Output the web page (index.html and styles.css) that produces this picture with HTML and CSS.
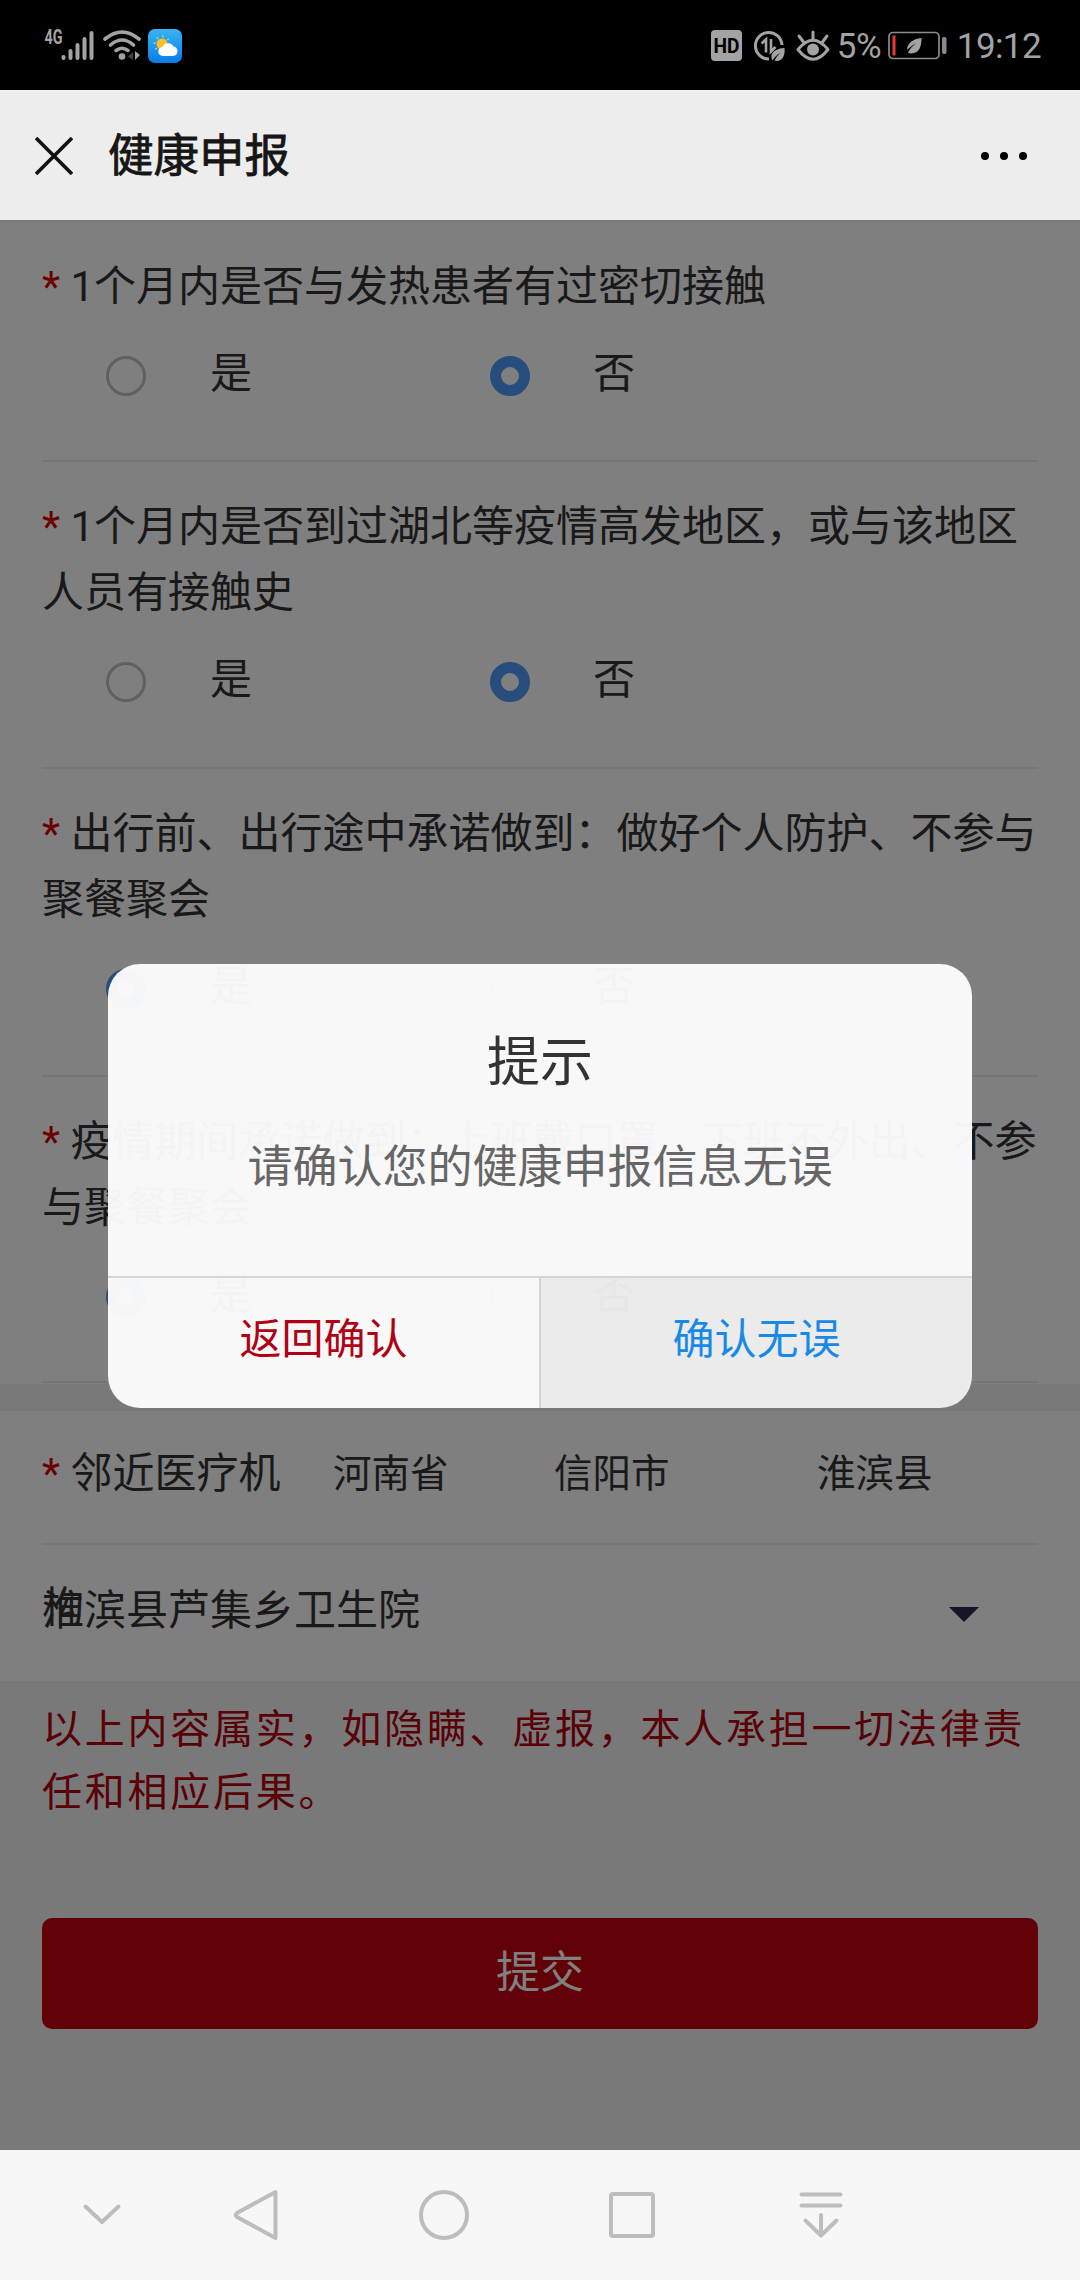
FILE: index.html
```
<!DOCTYPE html>
<html lang="zh-CN">
<head>
  <meta charset="UTF-8" />
  <meta name="viewport" content="width=device-width, initial-scale=1.0" />
  <title>健康申报</title>
  <link rel="stylesheet" href="styles.css">
</head>
<body>
  <div class="status-bar">
    <div class="status-left">
      <svg class="signal" width="52" height="34" viewBox="0 0 52 34">
        <text x="0.500" y="15" font-size="20" font-weight="bold" fill="#a3a3a3" textLength="18" lengthAdjust="spacingAndGlyphs">4G</text>
        <g stroke="#a3a3a3" stroke-width="4" stroke-linecap="round">
          <path d="M19.500 28V29M26.500 22V29M33.500 16V29M40.500 10V29M47.500 4V29" />
        </g>
      </svg>
      <svg class="wifi" width="38" height="34" viewBox="0 0 38 34">
        <g fill="none" stroke="#a3a3a3" stroke-width="3.600" stroke-linecap="round">
          <path d="M2 10Q19 -4 36 10" />
          <path d="M7.500 16Q19 6 30.500 16" />
          <path d="M13 21.500Q19 17 25 21.500" />
        </g>
        <circle cx="19" cy="27.500" r="3.300" fill="#a3a3a3" />
        <path d="M30 23v8l-5-3.500z" fill="#444" />
        <path d="M32 22v9l5-5z" fill="#a3a3a3" />
      </svg>
      <svg class="weather" width="34" height="34" viewBox="0 0 34 34">
        <defs>
          <linearGradient id="sky" x1="0" y1="0" x2="0" y2="1">
            <stop offset="0" stop-color="#38b4f5" />
            <stop offset="1" stop-color="#0a7ce8" />
          </linearGradient>
        </defs>
        <rect width="34" height="34" rx="7" fill="url(#sky)" />
        <circle cx="14" cy="15" r="7.500" fill="none" stroke="#c8cf70" stroke-width="2" stroke-dasharray="1.500 4.390" />
        <circle cx="14" cy="15" r="5.500" fill="#f7c324" />
        <path d="M15 27a4.500 4.500 0 0 1-.5-9 6 6 0 0 1 11-.5 4.800 4.800 0 0 1-.5 9.500z" fill="#fff" />
      </svg>
    </div>
    <div class="status-right">
      <svg class="hd" width="31" height="31" viewBox="0 0 31 31">
        <rect width="31" height="31" rx="4" fill="#a3a3a3" />
        <text x="2.500" y="22.500" font-size="20" font-weight="bold" fill="#000" textLength="26" lengthAdjust="spacingAndGlyphs">HD</text>
      </svg>
      <svg class="saver" width="32" height="32" viewBox="0 0 32 32">
        <path d="M29 15A13.300 13.300 0 1 0 16 29" fill="none" stroke="#a3a3a3" stroke-width="3" />
        <path d="M8.500 13.500l4.500-4V22.500M18 9v12.500l4.500-4.500" fill="none" stroke="#a3a3a3" stroke-width="2.600" />
        <path d="M31.500 18c-8 .5-13.500 4-13 9 0 1.500.5 2.500 1 3.500 3-4.500 5-6 8-7.500-3 2.500-4.500 4.500-6 7.500 7 2 11-4 10-12.500z" fill="#a3a3a3" />
      </svg>
      <svg class="eye" width="34" height="32" viewBox="0 0 34 32">
        <path d="M2 19.500Q17 1 32 19.500Q17 39 2 19.500z" fill="none" stroke="#a3a3a3" stroke-width="3" stroke-linejoin="round" />
        <circle cx="17" cy="19.500" r="6" fill="#a3a3a3" />
        <path d="M17 2v7M3 6l4.500 6M31 6l-4.500 6" stroke="#a3a3a3" stroke-width="3" stroke-linecap="round" />
      </svg>
      <span class="percent">5%</span>
      <svg class="battery" width="59" height="30" viewBox="0 0 59 30">
        <rect x="1" y="1.500" width="50" height="26" rx="4" fill="none" stroke="#8b8b8b" stroke-width="1.700" />
        <rect x="4.500" y="4.500" width="3" height="20" fill="#e53935" />
        <rect x="54" y="6" width="4.500" height="17" rx="2" fill="#8b8b8b" />
        <path d="M33.500 7c-9 1-14 5-14.500 12 3-3 6-5 9-7-3 3-6 5-8 10 10 2 13.500-4 13.500-15z" fill="#a3a3a3" />
      </svg>
      <span class="time">19:12</span>
    </div>
  </div>

  <div class="nav-header">
    <svg class="close" width="38" height="38" viewBox="0 0 38 38">
      <path d="M1 1L37 37M37 1L1 37" stroke="#111" stroke-width="3.600" />
    </svg>
    <h1>健康申报</h1>
    <div class="more"><i></i><i></i><i></i></div>
  </div>

  <div class="page">
    <div class="questions">
      <div class="question">
        <div class="label"><em>*</em> 1个月内是否与发热患者有过密切接触</div>
        <div class="options">
          <span class="option"><i class="radio"></i>是</span>
          <span class="option"><i class="radio checked"></i>否</span>
        </div>
      </div>
      <div class="question">
        <div class="label"><em>*</em> 1个月内是否到过湖北等疫情高发地区，或与该地区<br>人员有接触史</div>
        <div class="options">
          <span class="option"><i class="radio"></i>是</span>
          <span class="option"><i class="radio checked"></i>否</span>
        </div>
      </div>
      <div class="question tall">
        <div class="label"><em>*</em> 出行前、出行途中承诺做到：做好个人防护、不参与<br>聚餐聚会</div>
        <div class="options">
          <span class="option"><i class="radio checked"></i>是</span>
          <span class="option"><i class="radio"></i>否</span>
        </div>
      </div>
      <div class="question">
        <div class="label"><em>*</em> 疫情期间承诺做到：上班戴口罩、下班不外出、不参<br>与聚餐聚会</div>
        <div class="options">
          <span class="option"><i class="radio checked"></i>是</span>
          <span class="option"><i class="radio"></i>否</span>
        </div>
      </div>
    </div>

    <div class="hospital">
      <div class="region">
        <div class="region-label"><em>*</em> 邻近医疗机<span class="overflow">构</span></div>
        <span class="province">河南省</span>
        <span class="city">信阳市</span>
        <span class="county">淮滨县</span>
      </div>
      <div class="select">
        <span>淮滨县芦集乡卫生院</span>
        <i class="arrow"></i>
      </div>
    </div>

    <p class="notice">以上内容属实，如隐瞒、虚报，本人承担一切法律责<br>任和相应后果。</p>
    <button class="submit" type="button">提交</button>

    <div class="mask">
      <div class="dialog">
        <h2>提示</h2>
        <p>请确认您的健康申报信息无误</p>
        <div class="dialog-footer">
          <button class="cancel" type="button">返回确认</button>
          <button class="confirm" type="button">确认无误</button>
        </div>
      </div>
    </div>
  </div>

  <div class="system-nav">
    <svg width="40" height="54" viewBox="0 0 40 54"><path d="M3.500 18.500L20 34l16.500-15.500" /></svg>
    <svg width="46" height="54" viewBox="0 0 46 54"><path d="M42.500 4v46L4 29q-2.500-2 0-4z" /></svg>
    <svg width="54" height="54" viewBox="0 0 54 54"><circle cx="27" cy="27" r="23" /></svg>
    <svg width="48" height="54" viewBox="0 0 48 54"><rect x="3" y="6" width="42" height="42" rx="2" /></svg>
    <svg width="44" height="54" viewBox="0 0 44 54"><path d="M2.500 6.500h39M2.500 17.500h39M22 27v20M6.500 32.500L22 47.500l15.500-15" /></svg>
  </div>
</body>
</html>
```

FILE: styles.css
```
* {
  box-sizing: border-box;
}

body {
  margin: 0;
  width: 1080px;
  height: 2280px;
  overflow: hidden;
  font-family: Roboto, "Noto Sans CJK SC", sans-serif;
  display: flex;
  flex-direction: column;
}

i,
em {
  font-style: normal;
}

button {
  border: none;
  padding: 0;
  margin: 0;
  font-family: inherit;
}

svg {
  display: block;
  flex-shrink: 0;
}

/* status bar */
.status-bar {
  height: 90px;
  background: #000;
  color: #a3a3a3;
  display: flex;
  justify-content: space-between;
  align-items: center;
  padding: 2px 39px 0 44px;
}

.status-left,
.status-right {
  display: flex;
  align-items: center;
}

.wifi {
  margin-left: 7px;
}

.weather {
  margin-left: 7px;
}

.hd {
  margin-bottom: 2px;
}

.saver {
  margin-left: 11px;
}

.eye {
  margin-left: 11px;
}

.percent {
  font-size: 35px;
  line-height: 40px;
  width: 42px;
  margin-left: 7px;
  padding-top: 2px;
  letter-spacing: -0.500px;
}

.battery {
  margin-left: 9px;
}

.time {
  font-size: 35px;
  line-height: 40px;
  margin-left: 10px;
  padding-top: 2px;
  letter-spacing: -0.600px;
}

/* title bar */
.nav-header {
  height: 130px;
  background: #ededed;
  display: flex;
  align-items: center;
  padding: 2px 53px 0 35px;
}

.nav-header h1 {
  flex: 1;
  margin: 2px 0 0 35px;
  font-size: 45.500px;
  font-weight: 400;
  line-height: 60px;
  color: #161616;
  -webkit-text-stroke: 0.800px #161616;
}

.more {
  display: flex;
  gap: 11px;
}

.more i {
  width: 8px;
  height: 8px;
  border-radius: 50%;
  background: #000;
}

/* form */
.page {
  position: relative;
  height: 1930px;
  background: #f2f2f2;
  color: #333;
}

.questions {
  height: 1164px;
  background: #fff;
  padding: 0 42px;
  border-top: 2px solid #f0f0f0;
}

.question {
  height: 240px;
  padding-top: 32px;
  border-bottom: 2px solid #ececec;
}

.question:nth-child(2) {
  height: 307px;
}

.question:nth-child(4) {
  height: 306px;
}

.question.tall {
  height: 308px;
}

.label {
  font-size: 42px;
  line-height: 66px;
  white-space: nowrap;
}

.label em,
.region-label em {
  color: #d80000;
}

.options {
  display: flex;
  padding-left: 64px;
  margin-top: 24px;
}

.option {
  display: flex;
  align-items: center;
  width: 384px;
  font-size: 42px;
  line-height: 60px;
}

.option:last-child .radio {
  margin-right: 63px;
}

.radio {
  width: 40px;
  height: 40px;
  margin: 4px 64px 0 0;
  border: 3px solid #c0c0c0;
  border-radius: 50%;
}

.radio.checked {
  border: 11px solid #4f9af8;
}

.hospital {
  height: 270px;
  margin-top: 27px;
  background: #fff;
  padding: 0 42px;
}

.region {
  height: 134px;
  border-bottom: 2px solid #ececec;
  display: flex;
  align-items: center;
  padding-bottom: 15px;
  font-size: 38.500px;
}

.region-label {
  position: relative;
  width: 291px;
  font-size: 42px;
  white-space: nowrap;
}

/* last character of the label drops onto the row below */
.overflow {
  position: absolute;
  left: 0;
  top: 134px;
}

.province {
  width: 221px;
}

.city {
  width: 263px;
}

.select {
  height: 136px;
  display: flex;
  align-items: center;
  justify-content: space-between;
  padding: 0 59px 14px 0;
  font-size: 42px;
}

.arrow {
  border: 15px solid transparent;
  border-top-color: #33284a;
  border-bottom: none;
  margin-top: 16px;
}

.notice {
  margin: 17px 42px 0;
  font-size: 40px;
  letter-spacing: 2.750px;
  line-height: 63px;
  white-space: nowrap;
  color: #b4000f;
}

.submit {
  display: block;
  width: 996px;
  height: 111px;
  margin: 94px 42px 0;
  padding-bottom: 10px;
  border-radius: 10px;
  background: #c4000e;
  color: #fff;
  font-size: 44px;
}

/* dialog */
.mask {
  position: absolute;
  top: 0;
  left: 0;
  width: 100%;
  height: 100%;
  background: rgba(0, 0, 0, 0.5);
}

.dialog {
  width: 864px;
  height: 444px;
  margin: 744px auto 0;
  border-radius: 32px;
  overflow: hidden;
  background: rgba(253, 253, 253, 0.96);
  text-align: center;
}

.dialog h2 {
  margin: 0;
  padding-top: 62px;
  font-size: 53px;
  font-weight: 400;
  line-height: 74px;
  color: #333;
}

.dialog p {
  margin: 33px 0 0;
  font-size: 45px;
  line-height: 70px;
  color: #666;
}

.dialog-footer {
  display: flex;
  height: 132px;
  margin-top: 73px;
  border-top: 2px solid #d5d5d5;
}

.dialog-footer button {
  flex: 1;
  padding-bottom: 16px;
  background: transparent;
  font-size: 42px;
}

.dialog-footer .cancel {
  color: #b00014;
}

.dialog-footer .confirm {
  color: #1989e8;
  background: rgba(0, 0, 0, 0.05);
  border-left: 2px solid #d5d5d5;
}

/* android navigation */
.system-nav {
  height: 130px;
  background: #f7f7f7;
  display: flex;
  align-items: center;
  padding-left: 82px;
}

.system-nav svg {
  fill: none;
  stroke: #bdbdbd;
  stroke-width: 4;
  stroke-linecap: round;
  stroke-linejoin: round;
}

.system-nav svg:nth-child(2) {
  margin-left: 111px;
}

.system-nav svg:nth-child(3) {
  margin-left: 138px;
}

.system-nav svg:nth-child(4) {
  margin-left: 137px;
}

.system-nav svg:nth-child(5) {
  margin-left: 143px;
}
```
